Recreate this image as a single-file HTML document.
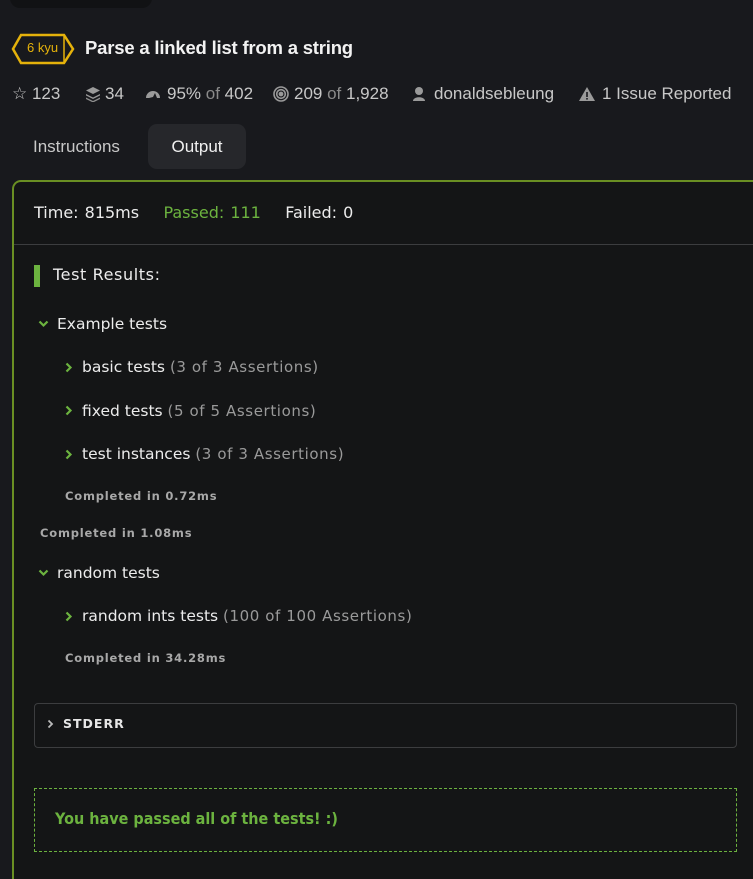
<!DOCTYPE html>
<html style="overflow:hidden;height:879px"><head><meta charset="utf-8"><style>
*{margin:0;padding:0;box-sizing:border-box}
body{width:753px;height:879px;overflow:hidden;background:#18191d;font-family:"Liberation Sans","DejaVu Sans",sans-serif;color:#e6e6e6;position:relative}
.abs{position:absolute;white-space:nowrap}
.topbox{position:absolute;left:10px;top:-20px;width:142px;height:28px;background:#111214;border-radius:10px}
.title{left:85px;top:37px;font-size:18.5px;font-weight:bold;color:#f2f2f2;letter-spacing:-0.2px}
.stats{top:84px;font-size:17px;color:#c8c8c8}
.stats .d{color:#8a8a8a}
.tab{top:124px;height:45px;font-size:17px;line-height:45px;border-radius:9px}
.panel{position:absolute;left:12px;top:180px;width:745px;height:699px;background:#141516;border:2px solid #6a8f23;border-bottom:none;border-right:none;border-radius:9px 0 0 0}
.hr{position:absolute;left:14px;top:244px;width:739px;height:1px;background:#3c3d3f}
.dv{font-family:"DejaVu Sans",sans-serif}
.t{font-size:15.5px;color:#ececec}
.g{color:#6cb33f}
.a{font-size:15px;color:#9a9a9a;letter-spacing:0.6px}
.c{font-size:11.5px;color:#a8a8a8;font-weight:bold;letter-spacing:0.8px}
</style></head><body>
<div class="topbox"></div>
<svg class="abs" style="left:11px;top:33px" width="64" height="32" viewBox="0 0 64 32"><path d="M10 2H53L62 16L53 30H10L2 16Z" fill="none" stroke="#e5b20b" stroke-width="2.5"/><line x1="53" y1="2" x2="53" y2="30" stroke="#e5b20b" stroke-width="1.5"/></svg>
<div class="abs" style="left:27px;top:40px;font-size:13px;color:#e5b20b">6 kyu</div>
<div class="abs title">Parse a linked list from a string</div>

<div class="abs stats" style="left:12px">☆ 123</div>
<svg class="abs" style="left:85px;top:86px" width="16" height="16" viewBox="0 0 16 16" fill="#9a9a9a"><path d="M8 1L15 4.5L8 8L1 4.5Z"/><path d="M1 8L8 11.5L15 8L15 9.5L8 13L1 9.5Z"/><path d="M1 11.5L8 15L15 11.5L15 13L8 16.5L1 13Z" opacity=".9"/></svg>
<div class="abs stats" style="left:105px">34</div>
<svg class="abs" style="left:145px;top:88px" width="16" height="12" viewBox="0 0 16 12" fill="#9a9a9a"><path d="M1 10A7 7 0 0 1 15 10L12 10L10 5L8 9L4 10Z"/></svg>
<div class="abs stats" style="left:167px">95% <span class="d">of</span> 402</div>
<svg class="abs" style="left:273px;top:86px" width="16" height="16" viewBox="0 0 16 16" fill="none" stroke="#9a9a9a" stroke-width="1.6"><circle cx="8" cy="8" r="7"/><circle cx="8" cy="8" r="4.3"/><circle cx="8" cy="8" r="1.6" fill="#9a9a9a"/></svg>
<div class="abs stats" style="left:294px">209 <span class="d">of</span> 1,928</div>
<svg class="abs" style="left:411px;top:86px" width="16" height="16" viewBox="0 0 16 16" fill="#9a9a9a"><circle cx="8" cy="5" r="4"/><path d="M2 15C2 10 14 10 14 15Z"/></svg>
<div class="abs stats" style="left:434px">donaldsebleung</div>
<svg class="abs" style="left:578px;top:86px" width="18" height="16" viewBox="0 0 18 16"><path d="M9 1L17 15H1Z" fill="#9a9a9a"/><rect x="8.2" y="6" width="1.6" height="5" fill="#18191d"/><rect x="8.2" y="12" width="1.6" height="1.6" fill="#18191d"/></svg>
<div class="abs stats" style="left:602px">1 Issue Reported</div>

<div class="abs tab" style="left:33px;color:#c8c8c8">Instructions</div>
<div class="abs tab" style="left:148px;width:98px;background:#26272b;text-align:center;color:#f0f0f0">Output</div>

<div class="panel"></div>
<div class="hr"></div>
<div class="abs dv" style="left:34px;top:203px;font-size:16px;color:#ececec;word-spacing:1px">Time: 815ms &nbsp;&nbsp; <span class="g">Passed: 111</span> &nbsp;&nbsp; Failed: 0</div>
<div class="abs" style="left:34px;top:265px;width:6px;height:22px;background:#6cb33f"></div>
<div class="abs dv" style="left:53px;top:265px;font-size:16px;color:#ececec;letter-spacing:0.6px">Test Results:</div>

<svg class="abs" style="left:38px;top:320px" width="11" height="8" viewBox="0 0 11 8"><path d="M1.5 1.5L5.5 5.5L9.5 1.5" fill="none" stroke="#6cb33f" stroke-width="2.2"/></svg>
<div class="abs dv t" style="left:57px;top:315px">Example tests</div>
<svg class="abs" style="left:65px;top:362px" width="8" height="11" viewBox="0 0 8 11"><path d="M1.5 1.5L5.5 5.5L1.5 9.5" fill="none" stroke="#6cb33f" stroke-width="2.2"/></svg>
<div class="abs dv t" style="left:82px;top:358px">basic tests <span class="a">(3 of 3 Assertions)</span></div>
<svg class="abs" style="left:65px;top:405px" width="8" height="11" viewBox="0 0 8 11"><path d="M1.5 1.5L5.5 5.5L1.5 9.5" fill="none" stroke="#6cb33f" stroke-width="2.2"/></svg>
<div class="abs dv t" style="left:82px;top:402px">fixed tests <span class="a">(5 of 5 Assertions)</span></div>
<svg class="abs" style="left:65px;top:449px" width="8" height="11" viewBox="0 0 8 11"><path d="M1.5 1.5L5.5 5.5L1.5 9.5" fill="none" stroke="#6cb33f" stroke-width="2.2"/></svg>
<div class="abs dv t" style="left:82px;top:445px">test instances <span class="a">(3 of 3 Assertions)</span></div>
<div class="abs dv c" style="left:65px;top:489px">Completed in 0.72ms</div>
<div class="abs dv c" style="left:40px;top:526px">Completed in 1.08ms</div>

<svg class="abs" style="left:38px;top:569px" width="11" height="8" viewBox="0 0 11 8"><path d="M1.5 1.5L5.5 5.5L9.5 1.5" fill="none" stroke="#6cb33f" stroke-width="2.2"/></svg>
<div class="abs dv t" style="left:57px;top:564px">random tests</div>
<svg class="abs" style="left:65px;top:611px" width="8" height="11" viewBox="0 0 8 11"><path d="M1.5 1.5L5.5 5.5L1.5 9.5" fill="none" stroke="#6cb33f" stroke-width="2.2"/></svg>
<div class="abs dv t" style="left:82px;top:607px">random ints tests <span class="a">(100 of 100 Assertions)</span></div>
<div class="abs dv c" style="left:65px;top:651px">Completed in 34.28ms</div>

<div class="abs" style="left:34px;top:703px;width:703px;height:45px;border:1px solid #3c3d3f;border-radius:4px"></div>
<svg class="abs" style="left:47px;top:719px" width="7" height="10" viewBox="0 0 7 10"><path d="M1.5 1.5L5 5L1.5 8.5" fill="none" stroke="#bbb" stroke-width="1.8"/></svg>
<div class="abs dv" style="left:63px;top:716px;font-size:12.5px;font-weight:bold;color:#e6e6e6;letter-spacing:1px">STDERR</div>

<div class="abs" style="left:34px;top:788px;width:703px;height:64px;border:1px dashed #6cb33f"></div>
<div class="abs dv" style="left:55px;top:809px;font-size:16px;color:#6cb33f;font-weight:bold;transform:scaleX(.9);transform-origin:left">You have passed all of the tests! :)</div>
</body></html>
